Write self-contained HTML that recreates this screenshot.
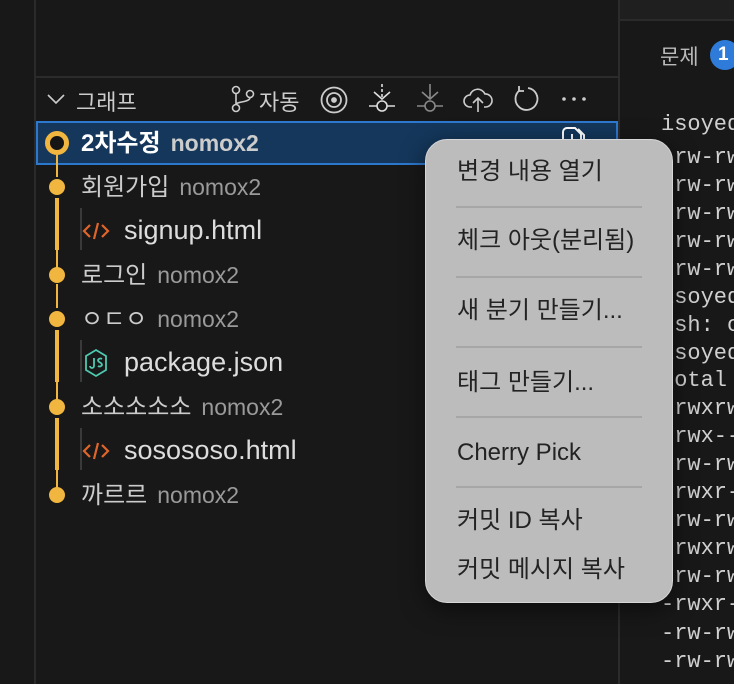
<!DOCTYPE html>
<html><head><meta charset="utf-8"><style>
*{margin:0;padding:0;box-sizing:border-box}
html,body{width:734px;height:684px;overflow:hidden}
body{background:#181818;position:relative;font-family:"Liberation Sans","Noto Sans CJK KR",sans-serif;color:#ccc}
.a{position:absolute;white-space:nowrap}
.t{position:absolute;left:661px;width:73px;overflow:hidden;white-space:nowrap;font-family:"Liberation Mono","DejaVu Sans Mono",monospace;font-size:22px;color:#d0d0d0;line-height:28px}
.row{position:absolute;left:81px;font-size:24px;line-height:28px;color:#ccc;white-space:nowrap}
.row .n{color:#9a9a9a;margin-left:10px;font-size:23px}
.dot{position:absolute;left:49px;width:16px;height:16px;border-radius:50%;background:#f1b63f}
.ln{position:absolute;background:#f1b63f}
.mi{position:absolute;left:457px;font-size:24px;color:#232323;line-height:28px;white-space:nowrap}
.sep{position:absolute;left:456px;width:186px;height:2px;background:#a6a6a6}
.f{font-size:27px;color:#ddd}
</style></head><body>
<div class="a" style="left:34px;top:0;width:2px;height:684px;background:#2a2a2a"></div>
<div class="a" style="left:36px;top:76px;width:582px;height:2px;background:#2b2b2b"></div>
<div class="a" style="left:618px;top:0;width:2px;height:684px;background:#2b2b2b"></div>
<div class="a" style="left:620px;top:0;width:114px;height:21px;background:#1f1f1f;border-bottom:2px solid #2b2b2b"></div>
<div class="a" style="left:660px;top:41px;font-size:21px;color:#bbb">문제</div>
<div class="a" style="left:710px;top:40px;width:30px;height:30px;border-radius:50%;background:#2f7bd9;color:#fff;font-size:19px;font-weight:bold;padding-left:8px;line-height:30px">1</div>
<div class="t" style="top:111px">isoyed</div>
<div class="t" style="top:144px">-rw-rw</div>
<div class="t" style="top:172px">-rw-rw</div>
<div class="t" style="top:200px">-rw-rw</div>
<div class="t" style="top:228px">-rw-rw</div>
<div class="t" style="top:256px">-rw-rw</div>
<div class="t" style="top:284px">isoyed</div>
<div class="t" style="top:312px">zsh: c</div>
<div class="t" style="top:340px">isoyed</div>
<div class="t" style="top:367px">total</div>
<div class="t" style="top:395px">drwxrw</div>
<div class="t" style="top:423px">drwx--</div>
<div class="t" style="top:451px">-rw-rw</div>
<div class="t" style="top:479px">-rwxr-</div>
<div class="t" style="top:507px">-rw-rw</div>
<div class="t" style="top:535px">drwxrw</div>
<div class="t" style="top:563px">-rw-rw</div>
<div class="t" style="top:591px">-rwxr-</div>
<div class="t" style="top:620px">-rw-rw</div>
<div class="t" style="top:648px">-rw-rw</div>

<svg class="a" style="left:46px;top:91px" width="20" height="16" viewBox="0 0 20 16"><path d="M2 4l8 8 8-8" fill="none" stroke="#ccc" stroke-width="1.6"/></svg>
<div class="a" style="left:76px;top:85px;font-size:22px;color:#ccc">그래프</div>
<svg class="a" style="left:230px;top:85px" width="26" height="28" viewBox="0 0 26 28" fill="none" stroke="#ccc" stroke-width="1.6"><circle cx="6" cy="5" r="3.5"/><circle cx="6" cy="23" r="3.5"/><circle cx="20" cy="9" r="3.5"/><path d="M6 8.5v11M20 12.5c0 5-14 4-14 7"/></svg>
<div class="a" style="left:259px;top:85px;font-size:22px;color:#ccc">자동</div>
<svg class="a" style="left:319px;top:85px" width="30" height="30" viewBox="0 0 30 30" fill="none" stroke="#ccc" stroke-width="1.8"><circle cx="15" cy="15" r="12.5"/><circle cx="15" cy="15" r="7"/><circle cx="15" cy="15" r="2" fill="#ccc"/></svg>
<svg class="a" style="left:368px;top:82px" width="28" height="34" viewBox="0 0 28 34" fill="none" stroke="#ddd" stroke-width="1.6"><path d="M14 2v3M14 7v3M14 12v3" /><path d="M6 10l8 7 8-7"/><circle cx="14" cy="24" r="5"/><path d="M1 24h8M19 24h8"/></svg>
<svg class="a" style="left:416px;top:82px" width="28" height="34" viewBox="0 0 28 34" fill="none" stroke="#888" stroke-width="1.6"><path d="M14 2v15M6 10l8 7 8-7"/><circle cx="14" cy="24" r="5"/><path d="M1 24h8M19 24h8"/></svg>
<svg class="a" style="left:462px;top:86px" width="32" height="28" viewBox="0 0 32 28" fill="none" stroke="#ccc" stroke-width="1.6"><path d="M10 21H8a6 6 0 0 1 0-12 8 8 0 0 1 15-1 6.5 6.5 0 0 1 1 13h-2"/><path d="M16 26V13M11 17l5-5 5 5"/></svg>
<svg class="a" style="left:511px;top:85px" width="30" height="30" viewBox="0 0 30 30" fill="none" stroke="#ccc" stroke-width="1.8"><path d="M9 5a11 11 0 1 0 8-2"/><path d="M8 1v5h5" /></svg>
<svg class="a" style="left:561px;top:96px" width="26" height="6"><circle cx="3" cy="3" r="1.8" fill="#ccc"/><circle cx="13" cy="3" r="1.8" fill="#ccc"/><circle cx="23" cy="3" r="1.8" fill="#ccc"/></svg>

<div class="a" style="left:36px;top:121px;width:582px;height:44px;background:#14375b;border:2px solid #2d78cf"></div>
<svg class="a" style="left:560px;top:126px" width="30" height="20" viewBox="0 0 30 20" fill="none" stroke="#fff" stroke-width="2"><path d="M3 20V6a4 4 0 0 1 4-4h8l6 6v12M12 8v10M18 3l6 6v10"/></svg>

<div class="ln" style="left:56px;top:155px;width:2px;height:22px"></div>
<div class="ln" style="left:55px;top:198px;width:4px;height:52px"></div>
<div class="ln" style="left:56px;top:250px;width:2px;height:18px"></div>
<div class="ln" style="left:56px;top:284px;width:2px;height:24px"></div>
<div class="ln" style="left:55px;top:330px;width:4px;height:52px"></div>
<div class="ln" style="left:56px;top:382px;width:2px;height:18px"></div>
<div class="ln" style="left:55px;top:418px;width:4px;height:52px"></div>
<div class="ln" style="left:56px;top:470px;width:2px;height:18px"></div>
<div class="a" style="left:45px;top:131px;width:24px;height:24px;border-radius:50%;border:5px solid #f1b63f;background:#151515"></div>
<div class="dot" style="top:179px"></div>
<div class="dot" style="top:267px"></div>
<div class="dot" style="top:311px"></div>
<div class="dot" style="top:399px"></div>
<div class="dot" style="top:487px"></div>

<div class="row" style="top:129px;color:#fff;font-weight:bold">2차수정<span class="n" style="color:#ccc;font-weight:bold">nomox2</span></div>
<div class="row" style="top:173px">회원가입<span class="n">nomox2</span></div>
<div class="a" style="left:80px;top:208px;width:2px;height:42px;background:#3a3a3a"></div>
<svg class="a" style="left:82px;top:221px" width="28" height="20" viewBox="0 0 28 20" fill="none" stroke="#e0652b" stroke-width="2.2"><path d="M8 4L2 10l6 6M20 4l6 6-6 6M16 2l-4 16"/></svg>
<div class="row f" style="top:216px;left:124px">signup.html</div>
<div class="row" style="top:261px">로그인<span class="n">nomox2</span></div>
<div class="row" style="top:305px">ㅇㄷㅇ<span class="n">nomox2</span></div>
<div class="a" style="left:80px;top:340px;width:2px;height:42px;background:#3a3a3a"></div>
<svg class="a" style="left:83px;top:348px" width="26" height="30" viewBox="0 0 26 30" fill="none" stroke="#4ec9b0" stroke-width="1.8"><path d="M13 2l10 6v14l-10 6-10-6V8z"/><path d="M11 10v8a2 2 0 0 1-4 0M19 11a2.5 2 0 0 0-4 1c0 3 4 2 4 5a2.5 2 0 0 1-4 1"/></svg>
<div class="row f" style="top:348px;left:124px">package.json</div>
<div class="row" style="top:393px">소소소소소<span class="n">nomox2</span></div>
<div class="a" style="left:80px;top:428px;width:2px;height:42px;background:#3a3a3a"></div>
<svg class="a" style="left:82px;top:441px" width="28" height="20" viewBox="0 0 28 20" fill="none" stroke="#e0652b" stroke-width="2.2"><path d="M8 4L2 10l6 6M20 4l6 6-6 6M16 2l-4 16"/></svg>
<div class="row f" style="top:436px;left:124px">sosososo.html</div>
<div class="row" style="top:481px">까르르<span class="n">nomox2</span></div>

<div class="a" style="left:425px;top:139px;width:248px;height:464px;border-radius:22px;background:#bcbcbc;border:1px solid #d6d6d6;box-shadow:0 6px 24px rgba(0,0,0,.5)"></div>
<div class="mi" style="top:158px">변경 내용 열기</div>
<div class="sep" style="top:206px"></div>
<div class="mi" style="top:227px">체크 아웃(분리됨)</div>
<div class="sep" style="top:276px"></div>
<div class="mi" style="top:297px">새 분기 만들기...</div>
<div class="sep" style="top:346px"></div>
<div class="mi" style="top:369px">태그 만들기...</div>
<div class="sep" style="top:416px"></div>
<div class="mi" style="top:439px">Cherry Pick</div>
<div class="sep" style="top:486px"></div>
<div class="mi" style="top:507px">커밋 ID 복사</div>
<div class="mi" style="top:556px">커밋 메시지 복사</div>
</body></html>
